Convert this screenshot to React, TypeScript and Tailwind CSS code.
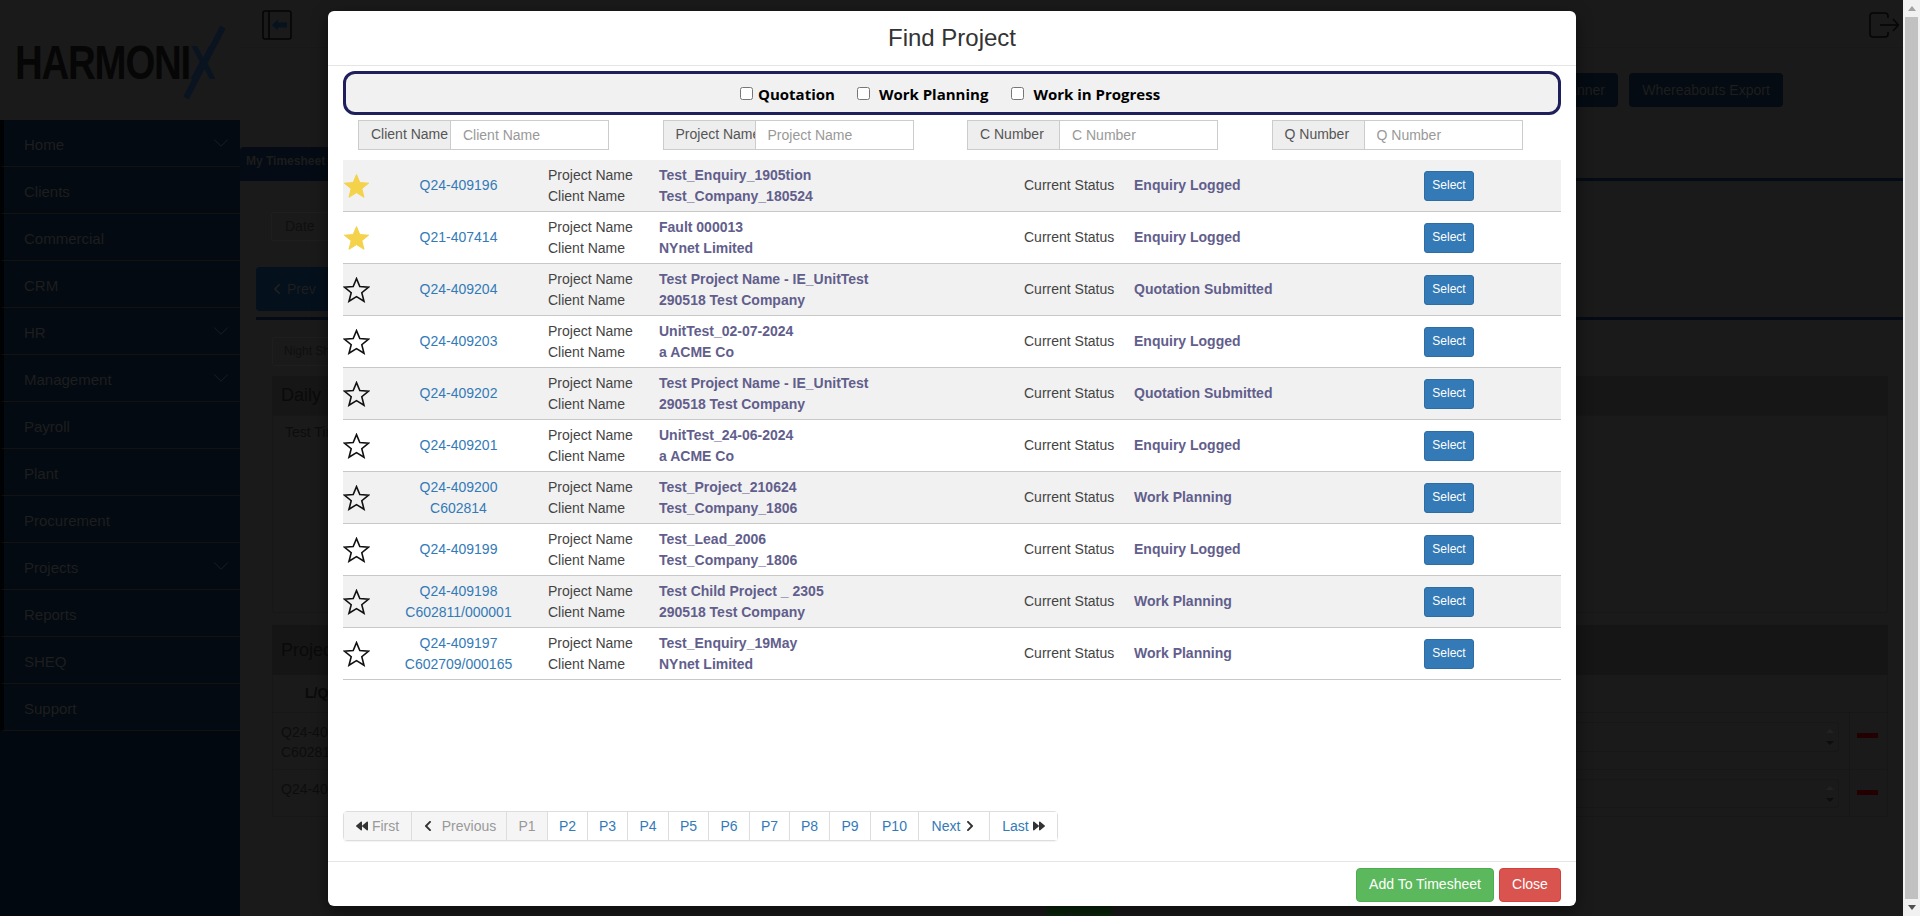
import React from "react";
import { FaBackward, FaChevronLeft, FaChevronRight, FaForward } from "react-icons/fa";
import { ChevronDown } from "lucide-react";

const navItems: [string, boolean][] = [
  ["Home", true], ["Clients", false], ["Commercial", false], ["CRM", false], ["HR", true],
  ["Management", true], ["Payroll", false], ["Plant", false], ["Procurement", false],
  ["Projects", true], ["Reports", false], ["SHEQ", false], ["Support", false],
];

const rows = [
  { fav: true, q: "Q24-409196", c: "", p: "Test_Enquiry_1905tion", n: "Test_Company_180524", s: "Enquiry Logged" },
  { fav: true, q: "Q21-407414", c: "", p: "Fault 000013", n: "NYnet Limited", s: "Enquiry Logged" },
  { fav: false, q: "Q24-409204", c: "", p: "Test Project Name - IE_UnitTest", n: "290518 Test Company", s: "Quotation Submitted" },
  { fav: false, q: "Q24-409203", c: "", p: "UnitTest_02-07-2024", n: "a ACME Co", s: "Enquiry Logged" },
  { fav: false, q: "Q24-409202", c: "", p: "Test Project Name - IE_UnitTest", n: "290518 Test Company", s: "Quotation Submitted" },
  { fav: false, q: "Q24-409201", c: "", p: "UnitTest_24-06-2024", n: "a ACME Co", s: "Enquiry Logged" },
  { fav: false, q: "Q24-409200", c: "C602814", p: "Test_Project_210624", n: "Test_Company_1806", s: "Work Planning" },
  { fav: false, q: "Q24-409199", c: "", p: "Test_Lead_2006", n: "Test_Company_1806", s: "Enquiry Logged" },
  { fav: false, q: "Q24-409198", c: "C602811/000001", p: "Test Child Project _ 2305", n: "290518 Test Company", s: "Work Planning" },
  { fav: false, q: "Q24-409197", c: "C602709/000165", p: "Test_Enquiry_19May", n: "NYnet Limited", s: "Work Planning" },
];

const Star = ({ filled }: { filled: boolean }) => (
  <svg width="27" height="26" viewBox="0 0 27 26" className="shrink-0">
    <path
      d="M13.5 1.6 L16.8 9.6 L25.6 10.2 L18.8 15.7 L21 24.3 L13.5 19.6 L6 24.3 L8.2 15.7 L1.4 10.2 L10.2 9.6 Z"
      fill={filled ? "#f4d24a" : "none"}
      stroke={filled ? "#f4d24a" : "#111111"}
      strokeWidth={filled ? 1 : 1.6}
      strokeLinejoin="miter"
    />
  </svg>
);

const SearchGroup = ({ label }: { label: string }) => (
  <div className="pl-[15px]">
    <div className="flex h-[30px] w-[251px]">
      <span className="w-[93px] shrink-0 overflow-hidden whitespace-nowrap border border-[#cccccc] bg-[#eeeeee] pl-3 text-[14px] leading-[26px] text-[#555555]">
        {label}
      </span>
      <input
        readOnly
        placeholder={label}
        className="min-w-0 flex-1 border border-l-0 border-[#cccccc] bg-white px-3 text-[14px] text-[#555555] outline-none placeholder:text-[#999999]"
      />
    </div>
  </div>
);

const Check = ({ label, className, gap }: { label: string; className: string; gap: string }) => (
  <label className={`flex items-center ${className}`}>
    <span className="h-[13px] w-[13px] rounded-[2.5px] border border-[#767676] bg-white" />
    <span className={`${gap} pt-[2px] font-['Open_Sans',sans-serif] text-[15px] font-bold leading-none text-black`}>{label}</span>
  </label>
);

const pages: { w: string; label: string; off?: boolean; icon?: "ff" | "l" | "r" | "bb" }[] = [
  { w: "w-[67px]", label: "First", off: true, icon: "ff" },
  { w: "w-[95px]", label: "Previous", off: true, icon: "l" },
  { w: "w-[41px]", label: "P1", off: true },
  { w: "w-[40px]", label: "P2" },
  { w: "w-[40px]", label: "P3" },
  { w: "w-[41px]", label: "P4" },
  { w: "w-[40px]", label: "P5" },
  { w: "w-[41px]", label: "P6" },
  { w: "w-[40px]", label: "P7" },
  { w: "w-[40px]", label: "P8" },
  { w: "w-[41px]", label: "P9" },
  { w: "w-[48px]", label: "P10" },
  { w: "w-[71px]", label: "Next", icon: "r" },
  { w: "w-[68px]", label: "Last", icon: "bb" },
];

const Modal = () => (
  <div className="absolute left-[328px] top-[11px] flex h-[895px] w-[1248px] flex-col rounded-[6px] bg-white shadow-[0_5px_15px_rgba(0,0,0,0.5)]">
    <div className="h-[55px] shrink-0 border-b border-[#e5e5e5] text-center text-[24px] leading-[53px] text-[#333333]">
      Find Project
    </div>
    <div className="flex flex-1 flex-col px-[15px] pt-[5px]">
      <div className="relative flex h-[44px] items-center rounded-[12px] border-[3px] border-[#1f1f5c] bg-[#f1f1f1]">
        <Check label="Quotation" className="ml-[394px]" gap="ml-[5px]" />
        <Check label="Work Planning" className="ml-[22px]" gap="ml-[9px]" />
        <Check label="Work in Progress" className="ml-[23px]" gap="ml-[9px]" />
      </div>
      <div className="mt-[5px] grid grid-cols-4">
        <SearchGroup label="Client Name" />
        <SearchGroup label="Project Name" />
        <SearchGroup label="C Number" />
        <SearchGroup label="Q Number" />
      </div>
      <div className="mt-[10px]">
        {rows.map((r, i) => (
          <div
            key={r.q}
            className={`flex h-[52px] items-center border-b border-[#c8c8c8] text-[14px] leading-[21px] text-[#444444] ${i % 2 === 0 ? "bg-[#f1f1f1]" : "bg-white"}`}
          >
            <div className="w-[27px] shrink-0"><Star filled={r.fav} /></div>
            <div className="w-[178px] shrink-0 pr-[1px] text-center text-[#337ab7]">
              <div>{r.q}</div>
              {r.c && <div>{r.c}</div>}
            </div>
            <div className="w-[111px] shrink-0">
              <div>Project Name</div>
              <div>Client Name</div>
            </div>
            <div className="w-[365px] shrink-0 font-bold text-[#625e8c]">
              <div>{r.p}</div>
              <div>{r.n}</div>
            </div>
            <div className="w-[110px] shrink-0">Current Status</div>
            <div className="w-[290px] shrink-0 font-bold text-[#625e8c]">{r.s}</div>
            <button className="h-[30px] w-[50px] rounded-[3px] border border-[#2e6da4] bg-[#337ab7] text-[12px] text-white">Select</button>
          </div>
        ))}
      </div>
      <div className="mt-auto mb-[20px] flex h-[30px] w-max rounded-[4px] border border-[#dddddd] text-[14px] shadow-[0_1px_1px_rgba(0,0,0,0.05)]">
        {pages.map((p, i) => (
          <div
            key={p.label}
            className={`${p.w} flex items-center justify-center gap-[4px] ${i ? "border-l border-[#dddddd]" : ""} ${p.off ? "bg-[#f5f5f5] text-[#999999]" : "bg-white text-[#337ab7]"}`}
          >
            {p.icon === "ff" && <FaBackward className="text-[12px] text-[#333333]" />}
            {p.icon === "l" && <FaChevronLeft className="mr-[4px] text-[12px] text-[#333333]" />}
            <span>{p.label}</span>
            {p.icon === "r" && <FaChevronRight className="text-[12px] text-[#333333]" />}
            {p.icon === "bb" && <FaForward className="text-[12px] text-[#333333]" />}
          </div>
        ))}
      </div>
    </div>
    <div className="flex h-[45px] shrink-0 items-center justify-end gap-[5px] border-t border-[#e5e5e5] px-[15px] pt-[1px]">
      <button className="h-[34px] w-[138px] rounded-[4px] border border-[#4cae4c] bg-[#5cb85c] text-[14px] text-white">Add To Timesheet</button>
      <button className="h-[34px] w-[62px] rounded-[4px] border border-[#d43f3a] bg-[#d9534f] text-[14px] text-white">Close</button>
    </div>
  </div>
);

const Spinner = () => (
  <div className="flex flex-col gap-[8px] pr-[4px]">
    <span className="h-0 w-0 border-x-[4px] border-b-[4px] border-x-transparent border-b-[#222222]" />
    <span className="h-0 w-0 border-x-[4px] border-t-[4px] border-x-transparent border-t-[#0d0d0d]" />
  </div>
);

const Background = () => (
  <div className="flex min-w-0 flex-1 bg-[#1a1a1a]">
    <aside className="flex w-[240px] shrink-0 flex-col">
      <div className="relative h-[120px] shrink-0">
        <span className="absolute left-[15px] top-[38px] origin-left scale-x-[0.8] whitespace-nowrap text-[48px] font-bold leading-[50px] tracking-[-1.5px] text-[#060606]">HARMONI<span className="text-[#0a1420]">X</span></span>
        <svg className="absolute left-[180px] top-[22px]" width="48" height="80" viewBox="0 0 48 80"><path d="M43 5 L6 76" stroke="#0a1420" strokeWidth="6" fill="none" /></svg>
      </div>
      <nav className="flex-1 bg-[#010810]">
        {navItems.map(([n, c]) => (
          <div key={n} className="flex h-[47px] items-center justify-between border-b border-l-4 border-b-[#121212] border-l-[#010203] bg-[#030a12] pl-[20px] pr-[6px] pt-[5px] text-[15px] text-[#1e1e1e]">
            <span>{n}</span>
            {c && <ChevronDown size={26} strokeWidth={0.8} color="#1e2226" className="-mt-[5px]" />}
          </div>
        ))}
      </nav>
    </aside>
    <main className="min-w-0 flex-1">
      <div className="flex h-[48px] items-center justify-between border-b border-[#181818] pl-[22px] pr-[4px] pt-[3px]">
        <svg width="30" height="30" viewBox="0 0 30 30" fill="none">
          <rect x="1" y="1" width="28" height="28" rx="2" stroke="#050505" strokeWidth="1.6" />
          <path d="M7 1 V29" stroke="#050505" strokeWidth="1.6" />
          <path d="M10 15 L16 9.5 V12.5 H25 V17.5 H16 V20.5 Z" fill="#06121e" />
        </svg>
        <svg width="30" height="26" viewBox="0 0 30 26" fill="none" stroke="#050505" strokeWidth="1.5">
          <path d="M19 6 V4 Q19 1 16 1 H4 Q1 1 1 4 V22 Q1 25 4 25 H16 Q19 25 19 22 V20" />
          <path d="M11 13 H29 M24 7 L29.5 13 L24 19" />
        </svg>
      </div>
      <div className="mt-[25px] flex h-[34px] justify-end gap-[11px] pr-[120px]">
        <div className="h-[34px] whitespace-nowrap rounded-[4px] bg-[#040b12] px-[13px] text-center text-[14px] leading-[34px] text-[#1e1e1e]">Whereabouts Planner</div>
        <div className="h-[34px] w-[154px] shrink-0 rounded-[4px] bg-[#040b12] text-center text-[14px] leading-[34px] text-[#1e1e1e]">Whereabouts Export</div>
      </div>
      <div className="mt-[40px] h-[34px] border-b-[3px] border-[#050b14]">
        <div className="h-[34px] w-[90px] rounded-t-[4px] bg-[#040b14] pl-[6px] text-[12px] font-bold leading-[28px] text-[#1c1c1c]">My Timesheet</div>
      </div>
      <div className="ml-[31px] mt-[31px] h-[29px] w-[90px] rounded-[2px] border border-[#1e1e1e] pl-[13px] text-[14px] leading-[27px] text-[#0f0f0f]">Date</div>
      <div className="ml-[16px] mt-[26px] flex h-[44px] w-[90px] items-center gap-[4px] rounded-[4px] bg-[#04101c] pl-[15px] text-[14px] text-[#1e1e1e]"><FaChevronLeft className="text-[12px]" /><span>Prev</span></div>
      <div className="ml-[16px] mt-[6px] border-t-[3px] border-[#050b14] pl-[16px] pr-[15px] pt-[17px]">
        <div className="h-[29px] w-[90px] rounded-[2px] border border-[#1e1e1e] pl-[11px] text-[12px] leading-[27px] text-[#0f0f0f]">Night Shift</div>
        <div className="mt-[10px] h-[39px] bg-[#161616] pl-[9px] text-[18px] leading-[39px] text-[#0a0a0a]">Daily</div>
        <div className="h-[198px] rounded-b-[3px] border border-[#171717] pl-[12px] pt-[6px] text-[14px] text-[#0d0d0d]">Test Timesheet</div>
        <div className="mt-[12px] h-[50px] bg-[#151515] pl-[9px] text-[18px] leading-[50px] text-[#0a0a0a]">Project</div>
        <div className="border-x border-b border-[#171717]">
          <div className="flex h-[38px] items-center border-b border-[#171717] pl-[32px] text-[14px] font-bold text-[#0a0a0a]">L/Q</div>
          <div className="flex h-[57px] border-b border-[#171717] pl-[8px] text-[14px] leading-[20px] text-[#0d0d0d]">
            <div className="w-[300px] pt-[9px]"><div>Q24-409198</div><div>C602811/000001</div></div>
            <div className="ml-auto mt-[9px] flex h-[30px] w-[800px] items-center justify-end rounded-[3px] border border-[#171717]"><Spinner /></div>
            <div className="ml-[10px] h-full w-[38px] shrink-0 border-l border-[#171717] pl-[7px] pt-[20px]"><div className="h-[5px] w-[21px] bg-[#230002]" /></div>
          </div>
          <div className="flex h-[46px] pl-[8px] text-[14px] leading-[20px] text-[#0d0d0d]">
            <div className="w-[300px] pt-[9px]">Q24-409197</div>
            <div className="ml-auto mt-[9px] flex h-[29px] w-[800px] items-center justify-end rounded-[3px] border border-[#171717]"><Spinner /></div>
            <div className="ml-[10px] h-full w-[38px] shrink-0 border-l border-[#171717] pl-[7px] pt-[20px]"><div className="h-[5px] w-[21px] bg-[#230002]" /></div>
          </div>
        </div>
        <div className="ml-[775px] mt-[83px] h-[34px] w-[65px] bg-[#0a240a] text-center text-[14px] leading-[34px] text-[#1a1a1a]">Save</div>
      </div>
    </main>
  </div>
);

const Scrollbar = () => (
  <div className="flex h-full w-[17px] shrink-0 flex-col items-center bg-[#f1f1f1]">
    <div className="flex h-[17px] items-center"><span className="h-0 w-0 border-x-[4px] border-b-[5px] border-x-transparent border-b-[#a3a3a3]" /></div>
    <div className="w-[13px] flex-1 bg-[#c1c1c1]" />
    <div className="flex h-[17px] items-center"><span className="h-0 w-0 border-x-[4px] border-t-[5px] border-x-transparent border-t-[#505050]" /></div>
  </div>
);

export default function App() {
  return (
    <div className="relative flex h-[916px] w-[1920px] overflow-hidden font-['Liberation_Sans',Arial,sans-serif]">
      <Background />
      <Scrollbar />
      <Modal />
    </div>
  );
}
